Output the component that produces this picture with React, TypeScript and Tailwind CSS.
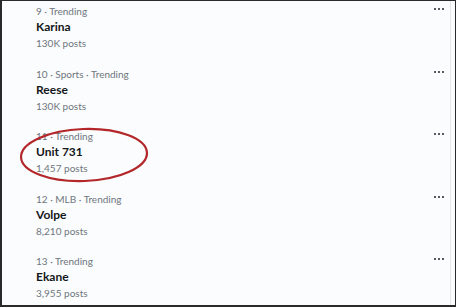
const trends = [
  { meta: "9 · Trending", name: "Karina", posts: "130K posts" },
  { meta: "10 · Sports · Trending", name: "Reese", posts: "130K posts" },
  { meta: "11 · Trending", name: "Unit 731", posts: "1,457 posts", circled: true },
  { meta: "12 · MLB · Trending", name: "Volpe", posts: "8,210 posts" },
  { meta: "13 · Trending", name: "Ekane", posts: "3,955 posts" },
];

const Dots = () => (
  <div className="flex gap-[2px] pt-[5px]">
    <span className="h-[2px] w-[2px] bg-[#555b61]" />
    <span className="h-[2px] w-[2px] bg-[#555b61]" />
    <span className="h-[2px] w-[2px] bg-[#555b61]" />
  </div>
);

export default function App() {
  return (
    <div className="h-[307px] w-[456px] overflow-hidden border-t border-l-2 border-b-2 border-r border-[#2a2a2a] bg-[#fbfcfd] font-['Lato',sans-serif]">
      <div className="mr-[4px] flex h-full flex-col border-r border-[#e6e8ea] pt-[2px]">
        {trends.map((t, i) => (
          <div key={i} className="relative flex h-[62.5px] shrink-0 justify-between pl-[34px] pr-[6px]">
            <div className="flex flex-col">
              <p className="h-[16px] text-[10px] leading-[16px] text-[#6e767d]">{t.meta}</p>
              <p className="h-[16px] text-[12px] font-bold leading-[16px] text-[#14171a]">{t.name}</p>
              <p className="h-[16px] text-[10px] leading-[16px] text-[#6e767d]">{t.posts}</p>
            </div>
            <Dots />
            {t.circled && (
              <svg className="pointer-events-none absolute left-[16px] top-[-2px]" width="132" height="58" viewBox="0 0 132 58">
                <ellipse cx="66" cy="29" rx="63" ry="26" fill="none" stroke="#b3262a" strokeWidth="2.2" transform="rotate(-2 66 29)" />
              </svg>
            )}
          </div>
        ))}
      </div>
    </div>
  );
}
